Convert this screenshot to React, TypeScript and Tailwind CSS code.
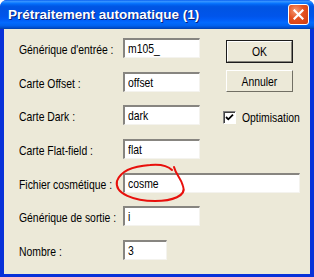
import React from 'react';

const font = "font-['Liberation_Sans',Arial,sans-serif] text-[13px] text-black leading-none whitespace-nowrap inline-block scale-x-[0.8]";

function Field({ label, value, wide, short }: { label: string; value: string; wide?: boolean; short?: boolean }) {
  return (
    <div className="flex items-center h-[20px]">
      <div className="w-[104px] shrink-0">
        <span className={`${font} origin-left`}>{label}</span>
      </div>
      <div
        className={`h-[20px] ${wide ? 'w-[177px]' : short ? 'w-[44px]' : 'w-[77px]'} bg-white border-t-2 border-l-2 border-b border-r border-t-[#878580] border-l-[#878580] border-b-[#f4f3ee] border-r-[#f4f3ee] flex items-center pl-[3px]`}
      >
        <span className={`${font} origin-left`}>{value}</span>
      </div>
    </div>
  );
}

export default function App() {
  return (
    <div className="w-[314px] h-[277px] bg-white">
      <div className="w-[314px] h-[277px] flex flex-col rounded-t-[7px] overflow-hidden bg-[#0831d9]">
        {/* Title bar */}
        <div className="h-[29px] shrink-0 flex items-center pl-[8px] pr-[5px] bg-[linear-gradient(to_bottom,#0058ee_0%,#3a93ff_4%,#288eff_7%,#127dff_10%,#036ffc_13%,#0262ee_17%,#0057e5_22%,#0054e3_28%,#0055eb_56%,#005bf5_66%,#026afe_78%,#0062ef_88%,#0052d6_94%,#0040ab_100%)]">
          <span className="font-['Liberation_Sans',Arial,sans-serif] font-bold text-[13.5px] text-white leading-none [text-shadow:1px_1px_0_#0a1f7a] mt-[1px]">
            Prétraitement automatique (1)
          </span>
          <div className="ml-auto w-[21px] h-[21px] rounded-[3px] border border-white bg-[radial-gradient(circle_at_35%_30%,#f59a74_0%,#e4501f_45%,#cc3c10_100%)] flex items-center justify-center">
            <svg width="11" height="11" viewBox="0 0 11 11">
              <path d="M1.5 1.5 L9.5 9.5 M9.5 1.5 L1.5 9.5" stroke="white" strokeWidth="2.2" strokeLinecap="square" />
            </svg>
          </div>
        </div>

        {/* Body */}
        <div className="relative flex-1 mx-[4px] mb-[3px] bg-[#ece9d8] pl-[15px] pt-[9px] flex flex-col gap-[13.7px]">
          <div className="flex">
            <div className="flex flex-col gap-[13.7px]">
              <Field label="Générique d'entrée :" value="m105_" />
              <Field label="Carte Offset :" value="offset" />
              <Field label="Carte Dark :" value="dark" />
              <Field label="Carte Flat-field :" value="flat" />
            </div>
            <div className="ml-[26px] pt-[2px] flex flex-col">
              <div className="w-[67px] h-[23px] border border-[#1c1c1c] flex">
                <div className="flex-1 border-t border-l border-b border-r border-t-white border-l-white border-b-[#85837a] border-r-[#85837a] flex items-center justify-center">
                  <span className={font}>OK</span>
                </div>
              </div>
              <div className="mt-[7px] w-[67px] h-[22px] border border-t-white border-l-white border-b-[#716f64] border-r-[#716f64] flex items-center justify-center">
                <span className={font}>Annuler</span>
              </div>
              <div className="mt-[19px] -ml-[3px] flex items-center gap-[6px]">
                <div className="w-[13px] h-[13px] shrink-0 bg-white border-t border-l border-b border-r border-t-[#808080] border-l-[#808080] border-b-white border-r-white shadow-[inset_1px_1px_0_#404040] flex items-center justify-center">
                  <svg width="9" height="9" viewBox="0 0 9 9">
                    <path d="M1 4 L3.3 6.3 L8 1.6" stroke="#000" strokeWidth="1.8" fill="none" />
                  </svg>
                </div>
                <span className={`${font} origin-left`}>Optimisation</span>
              </div>
            </div>
          </div>
          <Field label="Fichier cosmétique :" value="cosme" wide />
          <Field label="Générique de sortie :" value="i" />
          <Field label="Nombre :" value="3" short />

          {/* hand-drawn red circle */}
          <svg className="absolute left-0 top-0 pointer-events-none" width="306" height="245" viewBox="4 29 306 245">
            <path
              d="M172 170 C168 166 160 164 150 165 C135 166 121 170 117 181 C114 194 135 201 155 201 C172 201 187 196 183 186 C181 178 176 175 174 167"
              stroke="#e8100c"
              strokeWidth="2"
              fill="none"
              strokeLinecap="round"
            />
          </svg>
        </div>
      </div>
    </div>
  );
}
